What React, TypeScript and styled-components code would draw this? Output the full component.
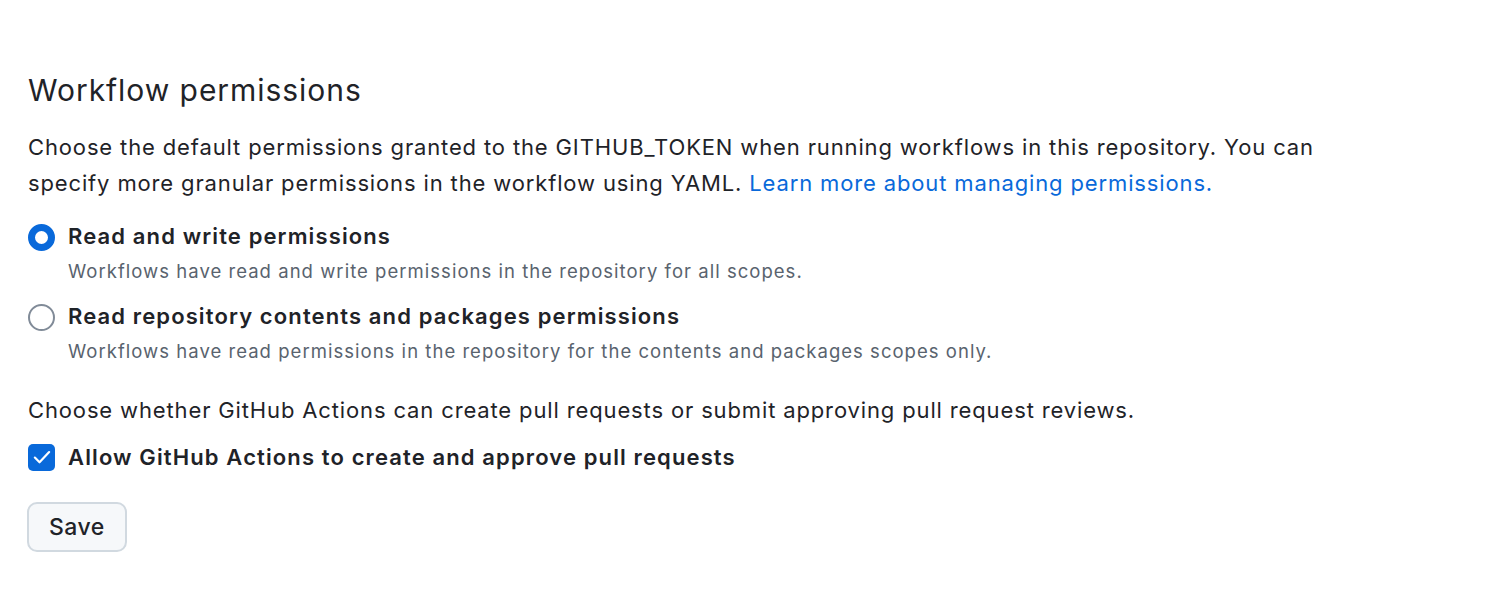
import React from "react";
import styled, { createGlobalStyle } from "styled-components";

const Global = createGlobalStyle`
  html, body { margin: 0; padding: 0; background: #ffffff; }
  body {
    font-family: Inter, "Noto Sans", "Liberation Sans", sans-serif;
    color: #1f2328;
    -webkit-font-smoothing: antialiased;
  }
`;

const Page = styled.div`
  padding: 70px 28px 0 28px;
  width: 1310px;
`;

const Title = styled.h2`
  margin: 0;
  font-size: 30px;
  line-height: 40px;
  font-weight: 400;
  letter-spacing: 0.95px;
  color: #1f2328;
`;

const Para = styled.p<{ $top: number }>`
  margin: ${(p) => p.$top}px 0 0 0;
  font-size: 22px;
  line-height: 36px;
  letter-spacing: 0.86px;
  color: #1f2328;
`;

const Link = styled.a`
  color: #0969da;
  text-decoration: none;
`;

const Options = styled.div`
  display: flex;
  flex-direction: column;
  gap: 15px;
  margin-top: 18.5px;
`;

const Option = styled.label`
  display: grid;
  grid-template-columns: 27px 1fr;
  column-gap: 13px;
  row-gap: 4px;
  align-items: center;
  cursor: pointer;
`;

const Radio = styled.span<{ $checked?: boolean }>`
  box-sizing: border-box;
  width: 27px;
  height: 27px;
  border-radius: 50%;
  background: #ffffff;
  border: ${(p) => (p.$checked ? "7px solid #0969da" : "2px solid #818b98")};
  margin-top: 3px;
`;

const Label = styled.span`
  font-size: 22px;
  line-height: 33px;
  font-weight: 600;
  letter-spacing: 1.12px;
  color: #1f2328;
`;

const Desc = styled.span`
  grid-column: 2;
  font-size: 18.5px;
  line-height: 28px;
  letter-spacing: 1.03px;
  color: #59636e;
`;

const CheckRow = styled.label`
  display: flex;
  align-items: center;
  gap: 13px;
  margin-top: 12.5px;
`;

const Box = styled.span`
  box-sizing: border-box;
  width: 27px;
  height: 27px;
  border-radius: 5px;
  background: #0969da;
  display: flex;
  align-items: center;
  justify-content: center;
`;

const Button = styled.button`
  display: block;
  margin-top: 28.5px;
  margin-left: -1px;
  box-sizing: border-box;
  height: 50px;
  padding: 0 20px;
  border: 2px solid #d1d9e0;
  border-radius: 10px;
  background: #f6f8fa;
  font-family: inherit;
  font-size: 23px;
  font-weight: 500;
  letter-spacing: 0.5px;
  color: #1f2328;
  cursor: pointer;
`;

export default function App() {
  return (
    <>
      <Global />
      <Page>
        <Title>Workflow permissions</Title>
        <Para $top={19}>
          Choose the default permissions granted to the GITHUB_TOKEN when running workflows in this repository. You can
          specify more granular permissions in the workflow using YAML.{" "}
          <Link href="#">Learn more about managing permissions.</Link>
        </Para>
        <Options>
          <Option>
            <Radio $checked />
            <Label>Read and write permissions</Label>
            <Desc>Workflows have read and write permissions in the repository for all scopes.</Desc>
          </Option>
          <Option>
            <Radio />
            <Label>Read repository contents and packages permissions</Label>
            <Desc>Workflows have read permissions in the repository for the contents and packages scopes only.</Desc>
          </Option>
        </Options>
        <Para $top={27.5}>
          Choose whether GitHub Actions can create pull requests or submit approving pull request reviews.
        </Para>
        <CheckRow>
          <Box>
            <svg width="22" height="22" viewBox="0 0 16 16" fill="none">
              <path d="M2.8 8.4 L6.2 11.8 L13.2 4.4" stroke="#ffffff" strokeWidth="1.6" strokeLinecap="round" strokeLinejoin="round" />
            </svg>
          </Box>
          <Label>Allow GitHub Actions to create and approve pull requests</Label>
        </CheckRow>
        <Button>Save</Button>
      </Page>
    </>
  );
}
